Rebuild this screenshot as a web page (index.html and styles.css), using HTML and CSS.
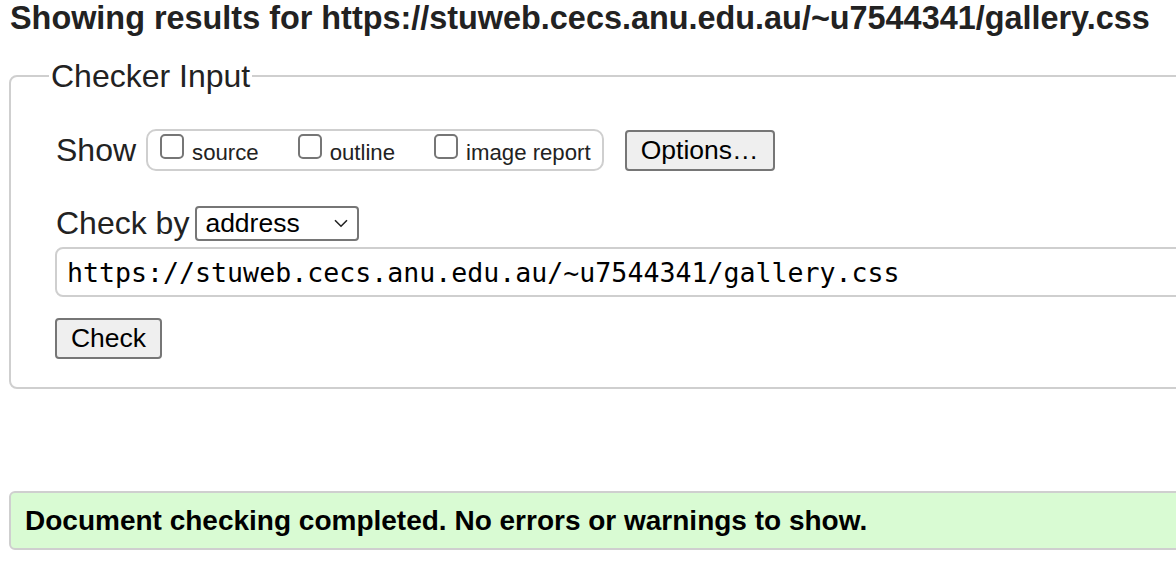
FILE: index.html
```html
<!DOCTYPE html>
<html lang="en">
<head>
<meta charset="utf-8">
<title>Checker</title>
<link rel="stylesheet" href="styles.css">
</head>
<body>
<h2 class="results-title">Showing results for https://stuweb.cecs.anu.edu.au/~u7544341/gallery.css</h2>
<form class="checker-form">
  <fieldset class="checker-fieldset">
    <legend class="checker-legend">Checker Input</legend>
    <div class="row show-row">
      <span class="row-label">Show</span>
      <div class="show-group">
        <label class="opt"><input type="checkbox" class="cb"><span>source</span></label>
        <label class="opt"><input type="checkbox" class="cb"><span>outline</span></label>
        <label class="opt"><input type="checkbox" class="cb"><span>image report</span></label>
      </div>
      <button type="button" class="btn options-btn">Options…</button>
    </div>
    <div class="row checkby-row">
      <span class="row-label">Check by</span>
      <div class="select-box">
        <span class="select-text">address</span>
        <svg class="chev" width="14" height="9" viewBox="0 0 14 9"><path d="M1 1.2 L7 7.2 L13 1.2" fill="none" stroke="#222" stroke-width="1.6"/></svg>
      </div>
    </div>
    <div class="url-input">https://stuweb.cecs.anu.edu.au/~u7544341/gallery.css</div>
    <div class="row check-row">
      <button type="button" class="btn check-btn">Check</button>
    </div>
  </fieldset>
</form>
<div class="success">Document checking completed. No errors or warnings to show.</div>
</body>
</html>
```

FILE: styles.css
```css
html, body {
  margin: 0;
  padding: 0;
  background: #fff;
  overflow: hidden;
}
body {
  width: 1176px;
  height: 562px;
  font-family: "Liberation Sans", Arial, sans-serif;
  color: #222;
}
.results-title {
  margin: 0;
  padding: 0 0 0 10px;
  font-size: 32.4px;
  font-weight: 700;
  line-height: 36px;
  white-space: nowrap;
  color: #222;
}
.checker-form {
  margin: 22px 0 0 9px;
  width: 1240px;
}
.checker-fieldset {
  margin: 0;
  border: 2px solid #cfcfcf;
  border-radius: 8px;
  padding: 35px 0 28px 45px;
}
.checker-legend {
  margin-left: -7px;
  padding: 0 2px;
  font-size: 32px;
  line-height: 36px;
  color: #222;
}
.row {
  display: flex;
  align-items: center;
}
.row-label {
  font-size: 32px;
  color: #222;
}
.show-row {
  height: 42px;
}
.show-group {
  margin-left: 10px;
  height: 42px;
  box-sizing: border-box;
  border: 2px solid #cfcfcf;
  border-radius: 10px;
  display: flex;
  align-items: center;
  padding: 0 11px 0 12px;
}
.opt {
  display: flex;
  align-items: flex-start;
  margin-right: 39px;
  font-size: 22.2px;
  color: #222;
}
.opt:last-child {
  margin-right: 0;
}
.opt span {
  margin-top: 6px;
}
.cb {
  appearance: none;
  -webkit-appearance: none;
  margin: 0 8px 0 0;
  width: 24px;
  height: 25px;
  box-sizing: border-box;
  border: 2px solid #767676;
  border-radius: 5px;
  background: #fff;
}
.btn {
  font-family: "Liberation Sans", Arial, sans-serif;
  font-size: 26.5px;
  color: #000;
  background: #efefef;
  border: 2px solid #767676;
  border-radius: 4px;
  box-sizing: border-box;
  padding: 0;
}
.options-btn {
  margin-left: 21px;
  width: 150px;
  height: 41px;
  margin-top: 1px;
}
.checkby-row {
  margin-top: 35px;
  height: 35px;
}
.select-box {
  margin-left: 6px;
  width: 164px;
  height: 35px;
  box-sizing: border-box;
  border: 2px solid #767676;
  border-radius: 4px;
  display: flex;
  align-items: center;
  justify-content: space-between;
  padding: 0 9px 0 8px;
  font-size: 26.5px;
  color: #000;
}
.url-input {
  margin-top: 6px;
  height: 50px;
  box-sizing: border-box;
  border: 2px solid #cfcfcf;
  border-radius: 8px;
  padding: 0 0 0 10px;
  display: flex;
  align-items: center;
  font-family: "DejaVu Sans Mono", monospace;
  font-size: 26.6px;
  color: #000;
  margin-left: -1px;
}
.check-row {
  margin-top: 21px;
}
.check-btn {
  width: 107px;
  height: 41px;
  margin-left: -1px;
}
.success {
  margin: 102px 0 0 9px;
  width: 1240px;
  height: 59px;
  box-sizing: border-box;
  background: #d9fbd3;
  border: 2px solid #cfcfcf;
  border-radius: 6px;
  padding-left: 14px;
  display: flex;
  align-items: center;
  font-size: 28px;
  font-weight: 700;
  color: #000;
}
```
